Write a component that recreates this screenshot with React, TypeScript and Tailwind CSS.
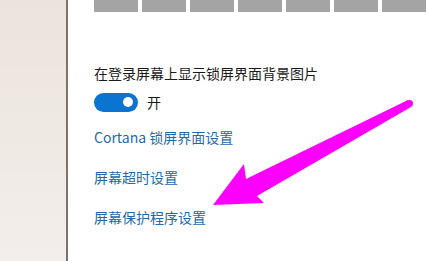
import React from 'react';

const tiles = [0, 1, 2, 3, 4, 5, 6];

const links = ['Cortana 锁屏界面设置', '屏幕超时设置', '屏幕保护程序设置'];

const App: React.FC = () => {
  return (
    <div
      className="relative flex h-[261px] w-[427px] overflow-hidden bg-white"
      style={{ fontFamily: '"Noto Sans CJK SC", "Noto Sans", sans-serif' }}
    >
      {/* Left desktop strip */}
      <div className="w-[66px] shrink-0 bg-gradient-to-b from-[#ebe4dc] to-[#f3eeeb]" />
      <div className="w-[2px] shrink-0 bg-[#7a736e]" />

      {/* Settings panel */}
      <div className="flex flex-1 flex-col pl-[26px]">
        <div className="flex gap-[4px]">
          {tiles.map(t => (
            <div key={t} className="h-[12px] w-[44px] shrink-0 bg-[#a4a4a4]" />
          ))}
        </div>

        <p className="mt-[51px] text-[14px] leading-[20px] text-[#1a1a1a]">在登录屏幕上显示锁屏界面背景图片</p>

        <div className="mt-[9px] flex items-center">
          <div className="flex h-[19px] w-[44px] items-center justify-end rounded-full bg-[#0a74d0] pr-[5px]">
            <div className="h-[10px] w-[10px] rounded-full bg-white" />
          </div>
          <span className="ml-[9px] text-[14px] leading-[20px] text-[#1a1a1a]">开</span>
        </div>

        <div className="mt-[15px] flex flex-col gap-[20px]">
          {links.map(l => (
            <span key={l} className="text-[14px] leading-[20px] text-[#1f6aac]">{l}</span>
          ))}
        </div>
      </div>

      {/* Annotation arrow */}
      <svg className="pointer-events-none absolute left-0 top-0" width="427" height="261" viewBox="0 0 427 261">
        <polygon
          points="213,205 264,203 257,196 411,107 408,100 246,179 244,164"
          fill="#fb00fb"
          strokeLinejoin="round"
        />
        <circle cx="409.5" cy="103.5" r="3.5" fill="#fb00fb" />
      </svg>
    </div>
  );
};

export default App;
